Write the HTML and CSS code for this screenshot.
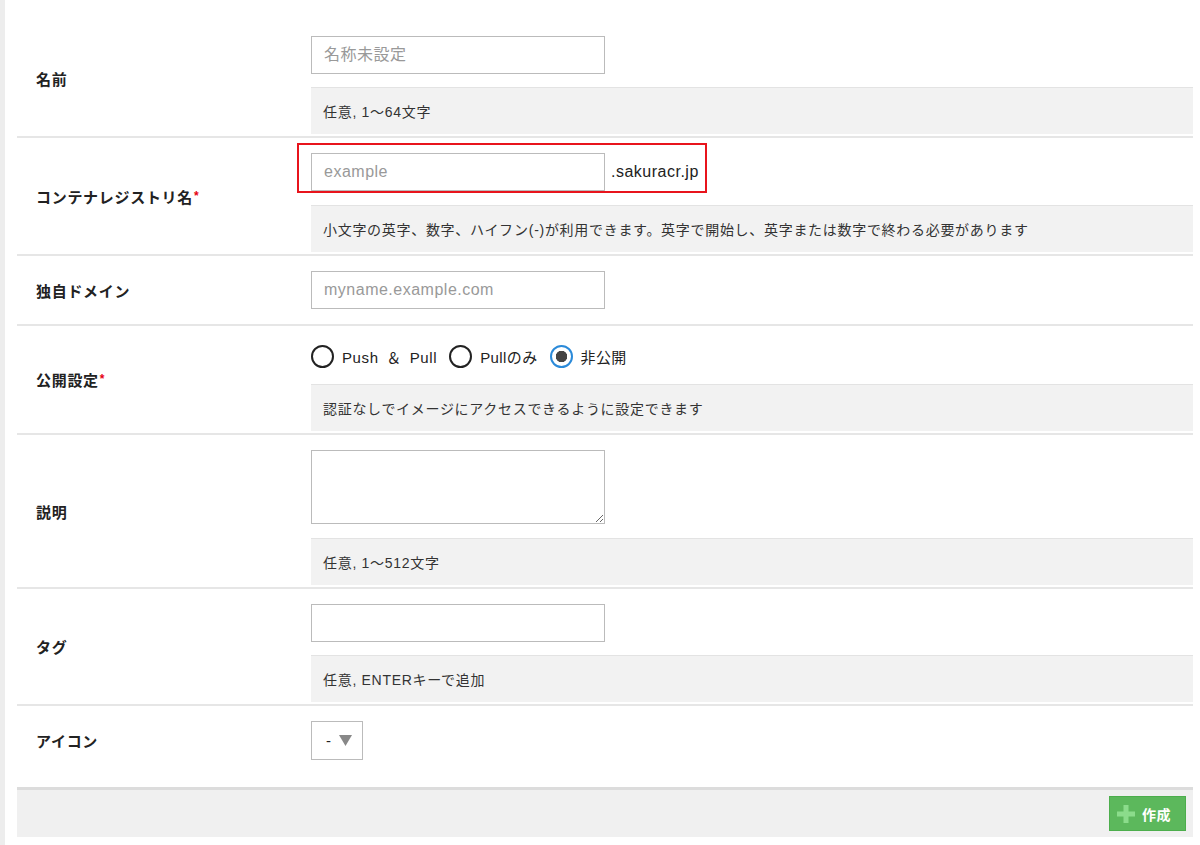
FILE: index.html
```html
<!DOCTYPE html>
<html lang="ja">
<head>
    <meta charset="UTF-8">
    <meta name="viewport" content="width=device-width, initial-scale=1.0">
    <title>コンテナレジストリ作成</title>
    <link rel="stylesheet" href="styles.css">
</head>
<body>
    <div class="page">
        <div class="form-table">
            <div class="form-row">
                <div class="form-label">名前</div>
                <div class="form-field">
                    <input type="text" class="text-input" placeholder="名称未設定">
                    <div class="help">任意, 1〜64文字</div>
                </div>
            </div>

            <div class="form-row">
                <div class="form-label">コンテナレジストリ名<span class="required">*</span></div>
                <div class="form-field">
                    <div class="domain">
                        <input type="text" class="text-input" placeholder="example">
                        <span class="suffix">.sakuracr.jp</span>
                    </div>
                    <div class="help help-domain">小文字の英字、数字、ハイフン(-)が利用できます。英字で開始し、英字または数字で終わる必要があります</div>
                </div>
            </div>

            <div class="form-row">
                <div class="form-label">独自ドメイン</div>
                <div class="form-field no-help">
                    <input type="text" class="text-input" placeholder="myname.example.com">
                </div>
            </div>

            <div class="form-row">
                <div class="form-label">公開設定<span class="required">*</span></div>
                <div class="form-field">
                    <div class="radio-group">
                        <label class="radio"><input type="radio" name="visibility"><span class="wide">Push ＆ Pull</span></label>
                        <label class="radio"><input type="radio" name="visibility">Pullのみ</label>
                        <label class="radio"><input type="radio" name="visibility" checked>非公開</label>
                    </div>
                    <div class="help">認証なしでイメージにアクセスできるように設定できます</div>
                </div>
            </div>

            <div class="form-row">
                <div class="form-label">説明</div>
                <div class="form-field">
                    <textarea class="text-area"></textarea>
                    <div class="help">任意, 1〜512文字</div>
                </div>
            </div>

            <div class="form-row">
                <div class="form-label">タグ</div>
                <div class="form-field">
                    <input type="text" class="text-input">
                    <div class="help">任意, ENTERキーで追加</div>
                </div>
            </div>

            <div class="form-row last">
                <div class="form-label">アイコン</div>
                <div class="form-field no-help">
                    <div class="select-box">
                        <span>-</span>
                        <svg width="13" height="11" viewBox="0 0 13 11"><polygon points="0,0 13,0 6.5,11" fill="#888"/></svg>
                    </div>
                </div>
            </div>
        </div>

        <div class="footer">
            <button class="btn-create">
                <svg width="18" height="18" viewBox="0 0 18 18">
                    <rect x="0" y="6.5" width="18" height="5" fill="#8bdc8b"/>
                    <rect x="6.5" y="0" width="5" height="18" fill="#8bdc8b"/>
                </svg>
                作成
            </button>
        </div>
    </div>
</body>
</html>
```

FILE: styles.css
```css
body {
    margin: 0;
    font-family: "Liberation Sans", "Noto Sans CJK JP", sans-serif;
    color: #222;
    background-color: #fff;
}
.page {
    border-left: 5px solid #ededed;
    padding: 21px 7px 8px 12px;
    min-height: 100vh;
    box-sizing: border-box;
}
.form-row {
    display: grid;
    grid-template-columns: 294px 1fr;
    align-items: center;
    border-bottom: 2px solid #e6e6e6;
}
.form-row.last {
    border-bottom: none;
    margin-bottom: 12px;
}
.form-label {
    padding-left: 19px;
    font-size: 15px;
    font-weight: bold;
    letter-spacing: 0.7px;
}
.required {
    color: #e60012;
    font-size: 12px;
    vertical-align: 3px;
    margin-left: 1px;
}
.form-field {
    padding: 15px 0 2px;
}
.form-field.no-help {
    padding-bottom: 15px;
}
.text-input {
    display: block;
    box-sizing: border-box;
    width: 294px;
    height: 38px;
    border: 1px solid #bbb;
    border-radius: 0;
    padding: 0 12px;
    font-family: "Liberation Sans", "Noto Sans CJK JP", sans-serif;
    font-size: 16px;
    letter-spacing: 0.5px;
    color: #222;
    outline: none;
}
.text-input::placeholder {
    color: #999;
}
.domain {
    position: relative;
    display: flex;
    align-items: center;
    width: max-content;
}
.domain::after {
    content: "";
    position: absolute;
    left: -14px;
    top: -10px;
    width: 410px;
    height: 50px;
    border: 2px solid #e8141c;
    box-sizing: border-box;
}
.suffix {
    margin-left: 6px;
    font-size: 16px;
    letter-spacing: 0.5px;
    color: #222;
}
.help {
    margin-top: 13px;
    height: 47px;
    box-sizing: border-box;
    background-color: #f2f2f2;
    border-top: 1px solid #e3e3e3;
    padding-left: 12px;
    display: flex;
    align-items: center;
    font-size: 14px;
    letter-spacing: 0.7px;
    color: #333;
}
.help-domain {
    margin-top: 14px;
}
.radio-group {
    display: flex;
    align-items: center;
    height: 30px;
}
.radio {
    display: flex;
    align-items: center;
    gap: 8px;
    margin-right: 12px;
    font-size: 15px;
    letter-spacing: 0.4px;
    color: #222;
}
.radio .wide {
    word-spacing: 3px;
    letter-spacing: 0.6px;
}
.radio input[type="radio"] {
    appearance: none;
    -webkit-appearance: none;
    width: 23px;
    height: 23px;
    margin: 0;
    border: 2px solid #222;
    border-radius: 50%;
    box-sizing: border-box;
    background-color: #fff;
}
.radio input[type="radio"]:checked {
    border-color: #2b8ad9;
    background: radial-gradient(circle, #444 0 5.5px, #fff 6px);
}
.text-area {
    display: block;
    box-sizing: border-box;
    width: 294px;
    height: 74px;
    border: 1px solid #bbb;
    border-radius: 0;
    outline: none;
}
.text-area + .help {
    margin-top: 14px;
}
.select-box {
    display: flex;
    align-items: center;
    gap: 8px;
    box-sizing: border-box;
    width: 52px;
    height: 39px;
    padding-left: 14px;
    border: 1px solid #bbb;
    font-size: 15px;
}
.footer {
    border-top: 3px solid #dcdcdc;
    background-color: #f0f0f0;
    height: 50px;
    box-sizing: border-box;
    padding: 6px 7px 0;
    display: flex;
    justify-content: flex-end;
    align-items: flex-start;
}
.btn-create {
    display: flex;
    align-items: center;
    gap: 7px;
    height: 35px;
    padding: 0 14px 0 7px;
    background-color: #5cb85c;
    border: 1px solid #4cae4c;
    color: #fff;
    font-family: "Liberation Sans", "Noto Sans CJK JP", sans-serif;
    font-size: 14px;
    font-weight: bold;
    letter-spacing: 0.5px;
    cursor: pointer;
}
```
